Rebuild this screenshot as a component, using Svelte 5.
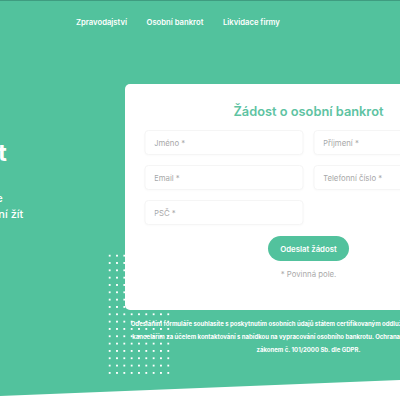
<script lang="ts">
	const navLinks = ['Zpravodajství', 'Osobní bankrot', 'Likvidace firmy'];
	const fields = ['Jméno *', 'Příjmení *', 'Email *', 'Telefonní číslo *', 'PSČ *'];
</script>

<div class="page">
	<section class="hero">
		<div class="dots"></div>
		<nav class="nav">
			{#each navLinks as link}
				<a href="#top">{link}</a>
			{/each}
		</nav>

		<div class="content">
			<div class="intro">
				<h1>Osobní bankrot</h1>
				<p>Zbavte se svých dluhů a začněte<br />znovu a bez starostí plnohodnotní žít</p>
			</div>

			<div class="form-col">
				<form class="card">
					<h2>Žádost o osobní bankrot</h2>
					<div class="grid">
						{#each fields as field}
							<input type="text" placeholder={field} />
						{/each}
					</div>
					<button type="button">Odeslat žádost</button>
					<div class="note">* Povinná pole.</div>
				</form>
				<p class="legal">
					Odesláním formuláře souhlasíte s poskytnutím osobních údajů státem certifikovaným oddlužovacím a jiným insolvenčním<br />
					kancelářím za účelem kontaktování s nabídkou na vypracování osobního bankrotu. Ochrana osobních údajů v souladu se<br />
					zákonem č. 101/2000 Sb. dle GDPR.
				</p>
			</div>
		</div>
	</section>
</div>

<style>
	:global(body) {
		margin: 0;
		background: #fff;
	}

	.page {
		width: 400px;
		height: 400px;
		overflow: hidden;
		font-family: Inter, 'Liberation Sans', sans-serif;
	}

	.hero {
		position: relative;
		height: 397px;
		box-sizing: border-box;
		background: #52c29d;
		border-top: 1px solid #3f9c80;
		clip-path: polygon(0 0, 100% 0, 100% 380px, 0 396px);
	}

	.dots {
		position: absolute;
		left: 106px;
		top: 251px;
		width: 66px;
		height: 125px;
		background-image: radial-gradient(circle, #fff 1px, transparent 1.4px);
		background-size: 7.33px 7.33px;
	}

	.nav {
		display: flex;
		gap: 19.5px;
		padding: 16px 0 0 76px;
		height: 83px;
		box-sizing: border-box;
	}

	.nav a {
		color: #fff;
		font-size: 7.7px;
		font-weight: 600;
		line-height: 11px;
		text-decoration: none;
		white-space: nowrap;
	}

	.content {
		display: flex;
		position: relative;
	}

	.intro {
		flex: none;
		width: 125px;
		padding-top: 55px;
		color: #fff;
		white-space: nowrap;
	}

	.intro h1 {
		margin: 0 0 0 -173px;
		font-size: 24px;
		line-height: 28px;
		font-weight: 700;
	}

	.intro p {
		margin: 23px 0 0 -170px;
		font-size: 11px;
		line-height: 16px;
		font-weight: 500;
	}

	.form-col {
		flex: none;
		width: 367px;
	}

	.card {
		display: flex;
		flex-direction: column;
		align-items: center;
		height: 226px;
		box-sizing: border-box;
		padding-top: 18px;
		background: #fff;
		border-radius: 5px;
		position: relative;
	}

	h2 {
		margin: 0;
		color: #5ec3a2;
		font-size: 12.8px;
		line-height: 20px;
		font-weight: 600;
		white-space: nowrap;
	}

	.grid {
		display: grid;
		grid-template-columns: 159px 159px;
		gap: 10px;
		margin-top: 8px;
		transform: translateX(-0.5px);
	}

	input {
		height: 25px;
		box-sizing: border-box;
		padding: 0 9px;
		border: 1px solid #f5f5f5;
		border-radius: 4px;
		background: #fff;
		font-family: inherit;
		font-size: 7.8px;
		min-width: 0;
		box-shadow: 0 1px 2px rgba(0, 0, 0, 0.02);
	}

	input::placeholder {
		color: #a8a8a8;
	}

	button {
		margin-top: 11px;
		width: 81px;
		height: 25px;
		border: 0;
		border-radius: 13px;
		background: #52c29d;
		color: #fff;
		font-family: inherit;
		font-size: 7.8px;
		font-weight: 600;
		padding: 0;
	}

	.note {
		margin-top: 8px;
		color: #aaa;
		font-size: 7.8px;
		line-height: 10px;
	}

	.legal {
		margin: 7px -10px 0;
		color: #fff;
		font-size: 6px;
		font-weight: 700;
		line-height: 13px;
		text-align: center;
		white-space: nowrap;
		position: relative;
	}
</style>
